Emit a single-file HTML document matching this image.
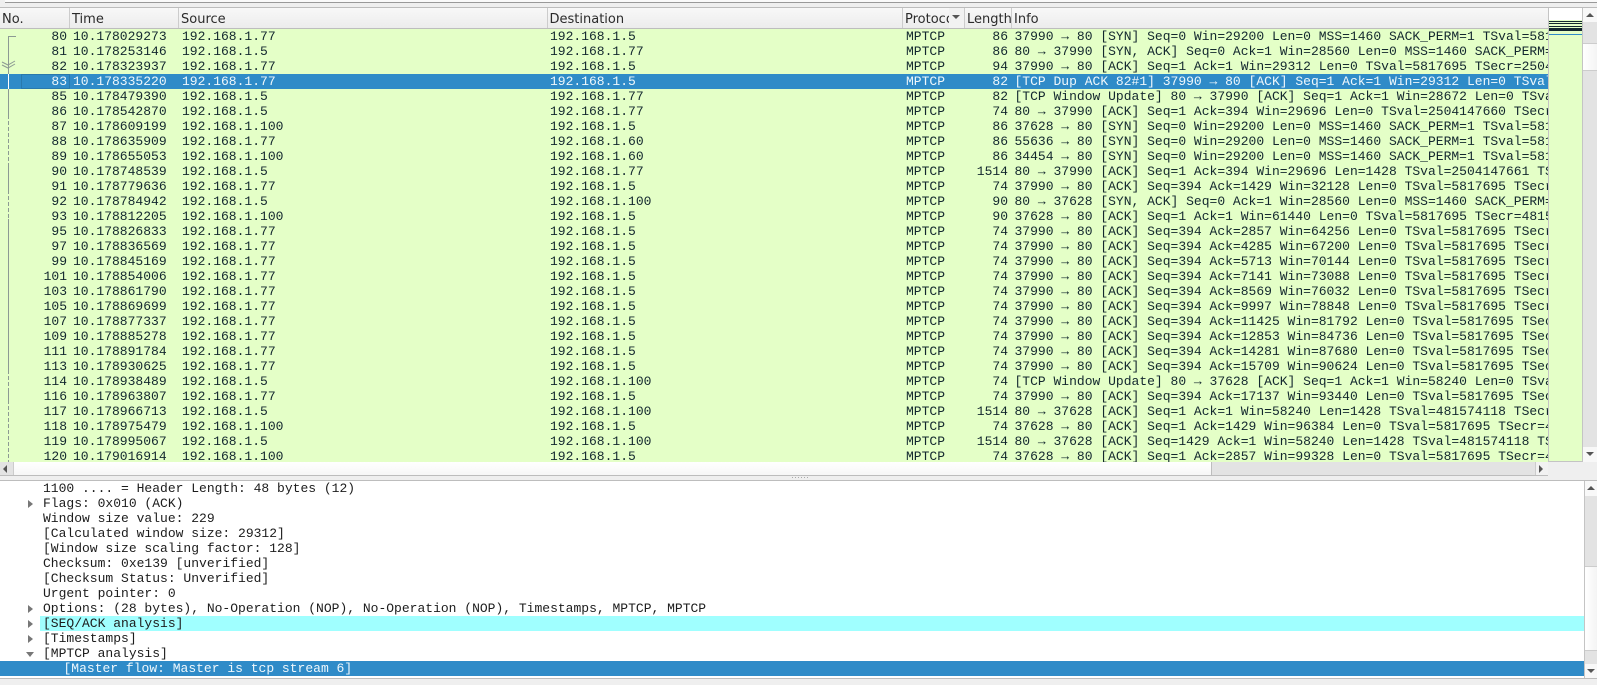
<!DOCTYPE html>
<html><head><meta charset="utf-8"><style>
html,body{margin:0;padding:0;width:1597px;height:685px;overflow:hidden;background:#efefef}
*{box-sizing:border-box}
.a{position:absolute}
#list{position:absolute;left:0;top:29px;width:1548px;height:433px;overflow:hidden;background:#e4ffc7}
.r{position:absolute;left:0;width:1548px;height:15px;font:13px/15px "Liberation Mono",monospace;color:#12272e;white-space:pre}
.r span{position:absolute;top:0}
.r .n{left:0;width:67px;text-align:right}
.r .t{left:73px}
.r .s{left:182px}
.r .d{left:550px}
.r .p{left:906px}
.r .l{left:950px;width:58px;text-align:right}
.r .i{left:1014.5px}
.sel{background:#2f8bc8;color:#eef7fc}
.h{position:absolute;top:8px;height:20px;font:13px/24px "DejaVu Sans",sans-serif;color:#2b2b2b;overflow:hidden;white-space:pre;border-left:1px solid #ccc;padding-left:2px}
#detail{position:absolute;left:0;top:481px;width:1584px;height:197px;background:#fff;overflow:hidden}
.q{position:absolute;left:43px;height:15px;font:13px/15px "Liberation Mono",monospace;color:#1c1c1c;white-space:pre}
.tr{position:absolute;left:28px;width:0;height:0;border-left:5px solid #777;border-top:4px solid transparent;border-bottom:4px solid transparent}
.btn{position:absolute;background:#f8f8f8}
</style></head><body>
<div class="a" style="left:5px;top:0;width:1592px;height:2px;background:#fafafa"></div>
<div class="a" style="left:5px;top:2px;width:1592px;height:1px;background:#999"></div>
<div class="a" style="left:0;top:7px;width:1597px;height:1px;background:#bcbcbc"></div>

<div class="a" style="left:0;top:8px;width:1548px;height:21px;background:linear-gradient(#f8f8f8,#ececec);border-bottom:1px solid #bdbdbd"></div>
<div class="h" style="left:0;width:69px;border:0">No.</div>
<div class="h" style="left:69px;width:109px">Time</div>
<div class="h" style="left:178px;width:369px">Source</div>
<div class="h" style="left:546.5px;width:356px">Destination</div>
<div class="h" style="left:902px;width:47px">Protocol</div>
<div class="a" style="left:949px;top:8px;width:16px;height:20px;background:#f2f2f2"></div>
<div class="a" style="left:952px;top:15px;width:0;height:0;border-top:4px solid #555;border-left:4px solid transparent;border-right:4px solid transparent"></div>
<div class="h" style="left:964px;width:47px">Length</div>
<div class="h" style="left:1011px;width:537px">Info</div>

<div id="list">
<div class="r" style="top:0"><span class="n">80</span><span class="t">10.178029273</span><span class="s">192.168.1.77</span><span class="d">192.168.1.5</span><span class="p">MPTCP</span><span class="l">86</span><span class="i">37990 → 80 [SYN] Seq=0 Win=29200 Len=0 MSS=1460 SACK_PERM=1 TSval=5817695</span></div>
<div class="r" style="top:15px"><span class="n">81</span><span class="t">10.178253146</span><span class="s">192.168.1.5</span><span class="d">192.168.1.77</span><span class="p">MPTCP</span><span class="l">86</span><span class="i">80 → 37990 [SYN, ACK] Seq=0 Ack=1 Win=28560 Len=0 MSS=1460 SACK_PERM=1</span></div>
<div class="r" style="top:30px"><span class="n">82</span><span class="t">10.178323937</span><span class="s">192.168.1.77</span><span class="d">192.168.1.5</span><span class="p">MPTCP</span><span class="l">94</span><span class="i">37990 → 80 [ACK] Seq=1 Ack=1 Win=29312 Len=0 TSval=5817695 TSecr=2504147660</span></div>
<div class="r sel" style="top:45px"><span class="n">83</span><span class="t">10.178335220</span><span class="s">192.168.1.77</span><span class="d">192.168.1.5</span><span class="p">MPTCP</span><span class="l">82</span><span class="i">[TCP Dup ACK 82#1] 37990 → 80 [ACK] Seq=1 Ack=1 Win=29312 Len=0 TSval=5817695</span></div>
<div class="r" style="top:60px"><span class="n">85</span><span class="t">10.178479390</span><span class="s">192.168.1.5</span><span class="d">192.168.1.77</span><span class="p">MPTCP</span><span class="l">82</span><span class="i">[TCP Window Update] 80 → 37990 [ACK] Seq=1 Ack=1 Win=28672 Len=0 TSval=2504147660</span></div>
<div class="r" style="top:75px"><span class="n">86</span><span class="t">10.178542870</span><span class="s">192.168.1.5</span><span class="d">192.168.1.77</span><span class="p">MPTCP</span><span class="l">74</span><span class="i">80 → 37990 [ACK] Seq=1 Ack=394 Win=29696 Len=0 TSval=2504147660 TSecr=5817695</span></div>
<div class="r" style="top:90px"><span class="n">87</span><span class="t">10.178609199</span><span class="s">192.168.1.100</span><span class="d">192.168.1.5</span><span class="p">MPTCP</span><span class="l">86</span><span class="i">37628 → 80 [SYN] Seq=0 Win=29200 Len=0 MSS=1460 SACK_PERM=1 TSval=5817695</span></div>
<div class="r" style="top:105px"><span class="n">88</span><span class="t">10.178635909</span><span class="s">192.168.1.77</span><span class="d">192.168.1.60</span><span class="p">MPTCP</span><span class="l">86</span><span class="i">55636 → 80 [SYN] Seq=0 Win=29200 Len=0 MSS=1460 SACK_PERM=1 TSval=5817695</span></div>
<div class="r" style="top:120px"><span class="n">89</span><span class="t">10.178655053</span><span class="s">192.168.1.100</span><span class="d">192.168.1.60</span><span class="p">MPTCP</span><span class="l">86</span><span class="i">34454 → 80 [SYN] Seq=0 Win=29200 Len=0 MSS=1460 SACK_PERM=1 TSval=5817695</span></div>
<div class="r" style="top:135px"><span class="n">90</span><span class="t">10.178748539</span><span class="s">192.168.1.5</span><span class="d">192.168.1.77</span><span class="p">MPTCP</span><span class="l">1514</span><span class="i">80 → 37990 [ACK] Seq=1 Ack=394 Win=29696 Len=1428 TSval=2504147661 TSecr=5817695</span></div>
<div class="r" style="top:150px"><span class="n">91</span><span class="t">10.178779636</span><span class="s">192.168.1.77</span><span class="d">192.168.1.5</span><span class="p">MPTCP</span><span class="l">74</span><span class="i">37990 → 80 [ACK] Seq=394 Ack=1429 Win=32128 Len=0 TSval=5817695 TSecr=2504147661</span></div>
<div class="r" style="top:165px"><span class="n">92</span><span class="t">10.178784942</span><span class="s">192.168.1.5</span><span class="d">192.168.1.100</span><span class="p">MPTCP</span><span class="l">90</span><span class="i">80 → 37628 [SYN, ACK] Seq=0 Ack=1 Win=28560 Len=0 MSS=1460 SACK_PERM=1</span></div>
<div class="r" style="top:180px"><span class="n">93</span><span class="t">10.178812205</span><span class="s">192.168.1.100</span><span class="d">192.168.1.5</span><span class="p">MPTCP</span><span class="l">90</span><span class="i">37628 → 80 [ACK] Seq=1 Ack=1 Win=61440 Len=0 TSval=5817695 TSecr=481574118</span></div>
<div class="r" style="top:195px"><span class="n">95</span><span class="t">10.178826833</span><span class="s">192.168.1.77</span><span class="d">192.168.1.5</span><span class="p">MPTCP</span><span class="l">74</span><span class="i">37990 → 80 [ACK] Seq=394 Ack=2857 Win=64256 Len=0 TSval=5817695 TSecr=2504147661</span></div>
<div class="r" style="top:210px"><span class="n">97</span><span class="t">10.178836569</span><span class="s">192.168.1.77</span><span class="d">192.168.1.5</span><span class="p">MPTCP</span><span class="l">74</span><span class="i">37990 → 80 [ACK] Seq=394 Ack=4285 Win=67200 Len=0 TSval=5817695 TSecr=2504147661</span></div>
<div class="r" style="top:225px"><span class="n">99</span><span class="t">10.178845169</span><span class="s">192.168.1.77</span><span class="d">192.168.1.5</span><span class="p">MPTCP</span><span class="l">74</span><span class="i">37990 → 80 [ACK] Seq=394 Ack=5713 Win=70144 Len=0 TSval=5817695 TSecr=2504147661</span></div>
<div class="r" style="top:240px"><span class="n">101</span><span class="t">10.178854006</span><span class="s">192.168.1.77</span><span class="d">192.168.1.5</span><span class="p">MPTCP</span><span class="l">74</span><span class="i">37990 → 80 [ACK] Seq=394 Ack=7141 Win=73088 Len=0 TSval=5817695 TSecr=2504147661</span></div>
<div class="r" style="top:255px"><span class="n">103</span><span class="t">10.178861790</span><span class="s">192.168.1.77</span><span class="d">192.168.1.5</span><span class="p">MPTCP</span><span class="l">74</span><span class="i">37990 → 80 [ACK] Seq=394 Ack=8569 Win=76032 Len=0 TSval=5817695 TSecr=2504147661</span></div>
<div class="r" style="top:270px"><span class="n">105</span><span class="t">10.178869699</span><span class="s">192.168.1.77</span><span class="d">192.168.1.5</span><span class="p">MPTCP</span><span class="l">74</span><span class="i">37990 → 80 [ACK] Seq=394 Ack=9997 Win=78848 Len=0 TSval=5817695 TSecr=2504147661</span></div>
<div class="r" style="top:285px"><span class="n">107</span><span class="t">10.178877337</span><span class="s">192.168.1.77</span><span class="d">192.168.1.5</span><span class="p">MPTCP</span><span class="l">74</span><span class="i">37990 → 80 [ACK] Seq=394 Ack=11425 Win=81792 Len=0 TSval=5817695 TSecr=2504147661</span></div>
<div class="r" style="top:300px"><span class="n">109</span><span class="t">10.178885278</span><span class="s">192.168.1.77</span><span class="d">192.168.1.5</span><span class="p">MPTCP</span><span class="l">74</span><span class="i">37990 → 80 [ACK] Seq=394 Ack=12853 Win=84736 Len=0 TSval=5817695 TSecr=2504147661</span></div>
<div class="r" style="top:315px"><span class="n">111</span><span class="t">10.178891784</span><span class="s">192.168.1.77</span><span class="d">192.168.1.5</span><span class="p">MPTCP</span><span class="l">74</span><span class="i">37990 → 80 [ACK] Seq=394 Ack=14281 Win=87680 Len=0 TSval=5817695 TSecr=2504147661</span></div>
<div class="r" style="top:330px"><span class="n">113</span><span class="t">10.178930625</span><span class="s">192.168.1.77</span><span class="d">192.168.1.5</span><span class="p">MPTCP</span><span class="l">74</span><span class="i">37990 → 80 [ACK] Seq=394 Ack=15709 Win=90624 Len=0 TSval=5817695 TSecr=2504147661</span></div>
<div class="r" style="top:345px"><span class="n">114</span><span class="t">10.178938489</span><span class="s">192.168.1.5</span><span class="d">192.168.1.100</span><span class="p">MPTCP</span><span class="l">74</span><span class="i">[TCP Window Update] 80 → 37628 [ACK] Seq=1 Ack=1 Win=58240 Len=0 TSval=481574118</span></div>
<div class="r" style="top:360px"><span class="n">116</span><span class="t">10.178963807</span><span class="s">192.168.1.77</span><span class="d">192.168.1.5</span><span class="p">MPTCP</span><span class="l">74</span><span class="i">37990 → 80 [ACK] Seq=394 Ack=17137 Win=93440 Len=0 TSval=5817695 TSecr=2504147661</span></div>
<div class="r" style="top:375px"><span class="n">117</span><span class="t">10.178966713</span><span class="s">192.168.1.5</span><span class="d">192.168.1.100</span><span class="p">MPTCP</span><span class="l">1514</span><span class="i">80 → 37628 [ACK] Seq=1 Ack=1 Win=58240 Len=1428 TSval=481574118 TSecr=5817695</span></div>
<div class="r" style="top:390px"><span class="n">118</span><span class="t">10.178975479</span><span class="s">192.168.1.100</span><span class="d">192.168.1.5</span><span class="p">MPTCP</span><span class="l">74</span><span class="i">37628 → 80 [ACK] Seq=1 Ack=1429 Win=96384 Len=0 TSval=5817695 TSecr=481574118</span></div>
<div class="r" style="top:405px"><span class="n">119</span><span class="t">10.178995067</span><span class="s">192.168.1.5</span><span class="d">192.168.1.100</span><span class="p">MPTCP</span><span class="l">1514</span><span class="i">80 → 37628 [ACK] Seq=1429 Ack=1 Win=58240 Len=1428 TSval=481574118 TSecr=5817695</span></div>
<div class="r" style="top:420px"><span class="n">120</span><span class="t">10.179016914</span><span class="s">192.168.1.100</span><span class="d">192.168.1.5</span><span class="p">MPTCP</span><span class="l">74</span><span class="i">37628 → 80 [ACK] Seq=1 Ack=2857 Win=99328 Len=0 TSval=5817695 TSecr=481574118</span></div>

<svg class="a" style="left:0;top:0" width="70" height="433" viewBox="0 0 70 433">
<path d="M8.5 8V433M8 7.5H16" stroke="#8c9a93" fill="none"/>
<path d="M8.5 45V60" stroke="#fff"/>
<path d="M2 33l6 3l7-4M2 36l6 3l7-4" stroke="#8c9a93" fill="none"/>
<rect x="21.5" y="45.5" width="48" height="14" fill="none" stroke="#2979ad"/>
<path d="M8.5 90V135M8.5 165V190M8.5 345V360M8.5 375V433" stroke="#e4ffc7" stroke-dasharray="2 4" fill="none"/>
</svg>
</div>

<!-- packet map -->
<div class="a" style="left:1548px;top:8px;width:35px;height:454px;background:#fff;border-left:1px solid #c4c4c4;border-right:1px solid #c4c4c4;border-bottom:1px solid #c4c4c4"></div>
<div class="a" style="left:1549px;top:20px;width:33px;height:441px;background:#e4ffc7"></div>
<div class="a" style="left:1549px;top:21px;width:33px;height:1px;background:#12272e"></div>
<div class="a" style="left:1549px;top:23px;width:33px;height:1px;background:#12272e"></div>
<div class="a" style="left:1549px;top:26px;width:33px;height:1px;background:#12272e"></div>
<div class="a" style="left:1549px;top:28px;width:33px;height:3px;background:#12272e"></div>
<div class="a" style="left:1549px;top:34px;width:33px;height:1px;background:#2f8bc8"></div>

<!-- top vertical scrollbar -->
<div class="a" style="left:1583px;top:8px;width:14px;height:454px;background:#e3e3e3"></div>
<div class="btn" style="left:1583px;top:8px;width:14px;height:14px"></div>
<div class="a" style="left:1586px;top:13px;width:0;height:0;border-bottom:4px solid #555;border-left:4px solid transparent;border-right:4px solid transparent"></div>
<div class="a" style="left:1583px;top:43px;width:14px;height:28px;background:linear-gradient(90deg,#fff,#f4f4f4);border-top:1px solid #ccc;border-bottom:1px solid #ccc"></div>
<div class="btn" style="left:1583px;top:447px;width:14px;height:15px"></div>
<div class="a" style="left:1586px;top:452px;width:0;height:0;border-top:4px solid #555;border-left:4px solid transparent;border-right:4px solid transparent"></div>

<!-- horizontal scrollbar -->
<div class="a" style="left:0;top:462px;width:1548px;height:14px;background:#e3e3e3;border-bottom:1px solid #bdbdbd"></div>
<div class="a" style="left:13px;top:462px;width:1199px;height:13px;background:linear-gradient(#fff,#f7f7f7);border-left:1px solid #ccc;border-right:1px solid #bdbdbd"></div>
<div class="a" style="left:3px;top:465px;width:0;height:0;border-right:4px solid #555;border-top:4px solid transparent;border-bottom:4px solid transparent"></div>
<div class="a" style="left:1535px;top:462px;width:13px;height:13px;background:#f2f2f2;border-left:1px solid #ccc"></div>
<div class="a" style="left:1539px;top:465px;width:0;height:0;border-left:4px solid #555;border-top:4px solid transparent;border-bottom:4px solid transparent"></div>

<!-- splitter -->
<div class="a" style="left:0;top:480px;width:1597px;height:1px;background:#bdbdbd"></div>
<div class="a" style="left:792px;top:477px;width:16px;height:1px;background:repeating-linear-gradient(90deg,#aaa 0 1px,transparent 1px 3px)"></div>

<div id="detail">
<div class="a" style="left:40px;top:135px;width:1544px;height:15px;background:#a0ffff"></div>
<div class="a" style="left:0;top:180px;width:1584px;height:15px;background:#2f8bc8"></div>
<div class="q" style="top:0">1100 .... = Header Length: 48 bytes (12)</div>
<div class="q" style="top:15px">Flags: 0x010 (ACK)</div>
<div class="q" style="top:30px">Window size value: 229</div>
<div class="q" style="top:45px">[Calculated window size: 29312]</div>
<div class="q" style="top:60px">[Window size scaling factor: 128]</div>
<div class="q" style="top:75px">Checksum: 0xe139 [unverified]</div>
<div class="q" style="top:90px">[Checksum Status: Unverified]</div>
<div class="q" style="top:105px">Urgent pointer: 0</div>
<div class="q" style="top:120px">Options: (28 bytes), No-Operation (NOP), No-Operation (NOP), Timestamps, MPTCP, MPTCP</div>
<div class="q" style="top:135px">[SEQ/ACK analysis]</div>
<div class="q" style="top:150px">[Timestamps]</div>
<div class="q" style="top:165px">[MPTCP analysis]</div>
<div class="q" style="top:180px;left:63.5px;color:#eef7fc">[Master flow: Master is tcp stream 6]</div>
<div class="tr" style="top:19px"></div>
<div class="tr" style="top:124px"></div>
<div class="tr" style="top:139px"></div>
<div class="tr" style="top:154px"></div>
<div class="a" style="left:26px;top:171px;width:0;height:0;border-top:5px solid #777;border-left:4px solid transparent;border-right:4px solid transparent"></div>
</div>

<!-- detail scrollbar -->
<div class="a" style="left:1584px;top:481px;width:13px;height:197px;background:#e3e3e3;border-left:1px solid #c4c4c4"></div>
<div class="btn" style="left:1585px;top:481px;width:12px;height:15px"></div>
<div class="a" style="left:1587px;top:486px;width:0;height:0;border-bottom:4px solid #555;border-left:4px solid transparent;border-right:4px solid transparent"></div>
<div class="a" style="left:1585px;top:566px;width:12px;height:85px;background:linear-gradient(90deg,#fff,#f4f4f4);border-top:1px solid #ccc;border-bottom:1px solid #ccc"></div>
<div class="btn" style="left:1585px;top:664px;width:12px;height:14px"></div>
<div class="a" style="left:1587px;top:669px;width:0;height:0;border-top:4px solid #555;border-left:4px solid transparent;border-right:4px solid transparent"></div>

<div class="a" style="left:0;top:678px;width:1597px;height:1px;background:#bdbdbd"></div>
</body></html>
